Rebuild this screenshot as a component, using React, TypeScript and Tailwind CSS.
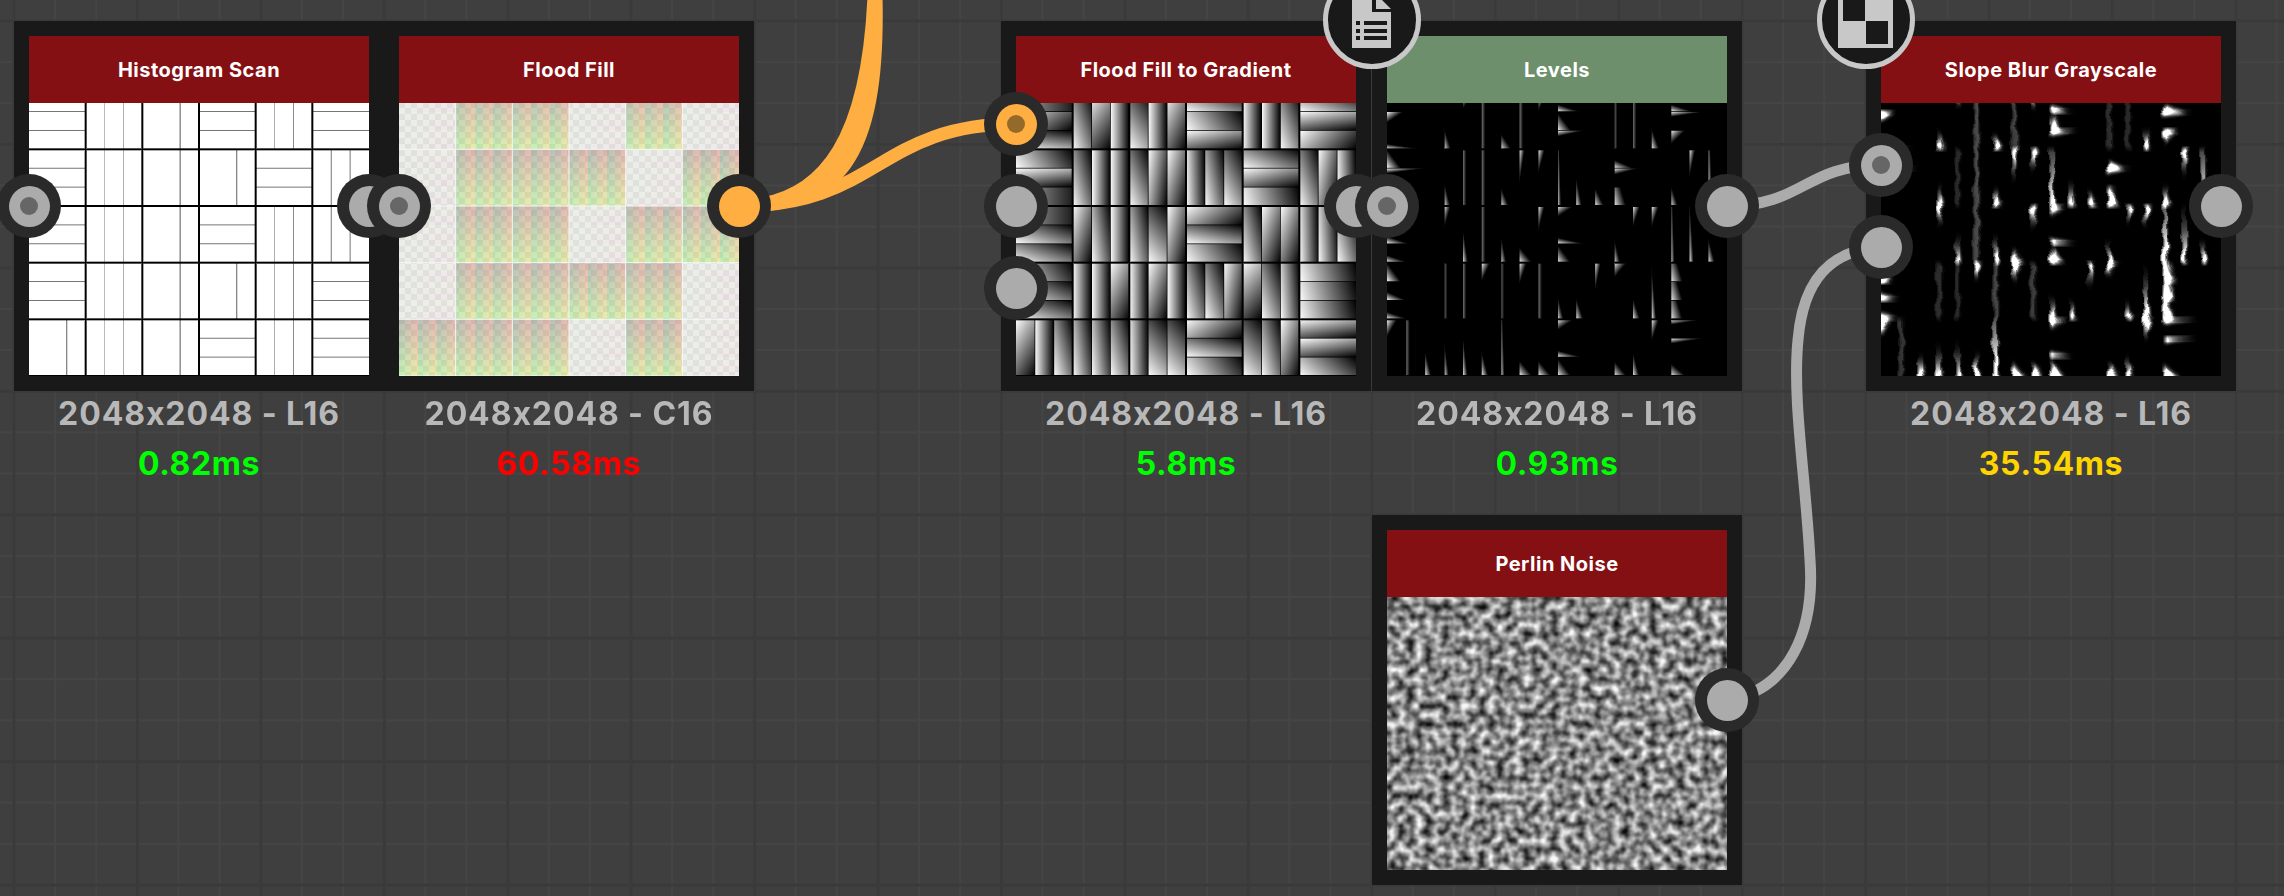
import { useEffect, useRef } from 'react'
import type { ReactNode } from 'react'

type Kind = 'histogram' | 'flood' | 'gradient' | 'levels' | 'slope' | 'perlin'

const S = 340
const B = S / 6

const ORIENT = ['HVVHVH', 'HVVHVH', 'HVVVHV', 'HVVHVV', 'HVVVVH', 'VVVHVH']

// width of the bright corner per plank: + bottom left, - top left, 0 never reaches the levels cut
const PLANKS = [
  [[0, 0, 0], [0, 0, 0], [0, 0, 0], [0, 0, 0], [0, 0, 0], [0, 0, 0]],
  [[0, -0.3, 0.65], [0.39, -0.6, 0.2], [0.6, 0.2, -0.47], [0.4, 0.25, -0.5], [0.2, 0.2, 0.42], [0.4, -0.63, -0.27]],
  [[0.25, -0.7, 0], [0.35, 0.2, 0.2], [0.45, -0.29, -0.36], [0.22, 0.32, 0.5], [0.35, -0.45, 0.22], [0.4, -0.32, 0.22]],
  [[0, 0.4, 0.4], [-0.37, 0.29, 0.2], [0.32, 0.7, -0.35], [-0.3, 0.5, 0.25], [0.35, -0.4, -0.4], [0.22, 0.24, 0.36]],
  [[0.25, 0.35, 0.4], [0.2, 0.2, -0.47], [0.2, -0.4, 0.2], [0.35, 0.4, -0.32], [-0.7, 0.4, 0.25], [0.22, 0.22, 0.22]],
  [[-0.55, 0.2, 0.35], [0.28, 0.27, 0.36], [0.22, 0.7, 0.7], [-0.3, 0.45, 0.25], [0.7, 0.36, -0.4], [-0.6, -0.6, 0.28]],
]

// how dark the two inner plank lines of a vertical block are, per column
const VERTICAL_LINES = [[0, 0.7], [0.3, 0.35], [0, 0.75], [0, 0.7], [0.35, 0.5], [0.6, 0.6]]

const clamp = (v: number) => Math.max(0, Math.min(1, v))

function hash(a: number, b: number) {
  const s = Math.sin(a * 127.1 + b * 311.7) * 43758.5453
  return s - Math.floor(s)
}

function noise(x: number, y: number) {
  const ix = Math.floor(x)
  const iy = Math.floor(y)
  const dot = (cx: number, cy: number) => {
    const a = hash(cx, cy) * Math.PI * 2
    return Math.cos(a) * (x - cx) + Math.sin(a) * (y - cy)
  }
  const fade = (t: number) => t * t * t * (t * (t * 6 - 15) + 10)
  const u = fade(x - ix)
  const v = fade(y - iy)
  const top = dot(ix, iy) * (1 - u) + dot(ix + 1, iy) * u
  const bottom = dot(ix, iy + 1) * (1 - u) + dot(ix + 1, iy + 1) * u
  return top * (1 - v) + bottom * v
}

function plankAt(x: number, y: number) {
  const c = Math.min(5, Math.floor(x / B))
  const r = Math.min(5, Math.floor(y / B))
  const fx = x - c * B
  const fy = y - r * B
  const vertical = ORIENT[r][c] === 'V'
  const along = vertical ? fx : fy
  const i = Math.min(2, Math.floor(along / (B / 3)))
  const inPlank = (along - (i * B) / 3) / (B / 3)
  const u = vertical ? inPlank : fx / B
  const v = vertical ? fy / B : inPlank
  const blockDist = Math.min(c > 0 ? fx : 99, c < 5 ? B - fx : 99, r > 0 ? fy : 99, B - fy)
  const plankDist = Math.min(i > 0 ? along - (i * B) / 3 : 99, i < 2 ? ((i + 1) * B) / 3 - along : 99)
  const line = along < B / 2 ? 0 : 1
  return { c, r, i, u, v, fy, vertical, blockDist, plankDist, line }
}

function gradientValue(p: ReturnType<typeof plankAt>) {
  const w = PLANKS[p.r][p.c][p.i]
  if (w === 0) return 0.74 * (1 - p.u * 0.85)
  const wu = Math.abs(w)
  const dv = w > 0 ? 1 - p.v : p.v
  return clamp(1 - (0.2 * p.u) / wu - 0.2 * dv * (5 - 1 / wu))
}

function levelsAt(x: number, y: number, lineGain = 0.5) {
  const p = plankAt(x, y)
  const w = Math.abs(PLANKS[p.r][p.c][p.i])
  const lit = clamp((gradientValue(p) - 0.8) / 0.2)
  // planks lit along a whole side only show as a thin dim line
  return w === 0.2 ? lit * lineGain : lit
}

function paint(ctx: CanvasRenderingContext2D, kind: Kind) {
  const img = ctx.createImageData(S, S)
  const levels = new Float32Array(S * S)
  if (kind === 'slope') {
    for (let y = 0; y < S; y++) for (let x = 0; x < S; x++) levels[y * S + x] = levelsAt(x + 0.5, y + 0.5, 0.3)
  }
  for (let y = 0; y < S; y++) {
    for (let x = 0; x < S; x++) {
      const px = x + 0.5
      const py = y + 0.5
      let rgb = [0, 0, 0]
      if (kind === 'perlin') {
        const n = noise(x / 9 + 3, y / 9 + 7) + 0.2 * noise(x / 4.5, y / 4.5)
        const g = clamp(0.53 + 0.85 * n) * 235 + 12
        rgb = [g, g, g]
      } else if (kind === 'slope') {
        const dx = noise(x / 12, y / 12) * 4
        let sum = 0
        for (let k = -3; k <= 3; k++) {
          for (let h = -2; h <= 2; h++) {
            const sx = Math.max(0, Math.min(S - 1, Math.round(x + dx + h)))
            const sy = Math.max(0, Math.min(S - 1, y + k))
            sum += levels[sy * S + sx]
          }
        }
        const v = sum / 35
        const g = clamp(v * 1.6 + v * v * 3) * 255
        rgb = [g, g, g]
      } else {
        const p = plankAt(px, py)
        const blockLine = clamp(1.5 - p.blockDist)
        const plankLine = clamp(0.95 - p.plankDist)
        if (kind === 'histogram') {
          const dark = p.vertical ? VERTICAL_LINES[p.c][p.line] : 0.6
          const g = 255 * (1 - plankLine * dark) * (1 - blockLine)
          rgb = [g, g, g]
        } else if (kind === 'flood') {
          const on = (Math.floor(x / 6) + Math.floor(y / 6)) % 2 === 0
          const base = on ? [240, 241, 238] : [227, 229, 225]
          const vb = p.fy / B
          const mix = (a: number, b: number, c: number, d: number) =>
            (a * (1 - p.u) + b * p.u) * (1 - vb) + (c * (1 - p.u) + d * p.u) * vb
          const tint = p.vertical
            ? [mix(0.76, 0.98, 0.8, 1), mix(0.8, 0.77, 1, 0.97), mix(0.77, 0.76, 0.78, 0.72)]
            : [0.98 + 0.02 * p.u, 0.99 - 0.04 * p.v * p.u, 0.98]
          const seam = clamp(1 - p.blockDist)
          rgb = base.map((b, j) => b * tint[j] * (1 - seam) + 246 * seam)
        } else {
          const g = kind === 'gradient' ? gradientValue(p) : levelsAt(px, py)
          const v = g * 255 * (1 - blockLine) * (1 - plankLine * 0.85)
          rgb = [v, v, v]
        }
      }
      const o = (y * S + x) * 4
      img.data[o] = rgb[0]
      img.data[o + 1] = rgb[1]
      img.data[o + 2] = rgb[2]
      img.data[o + 3] = 255
    }
  }
  ctx.putImageData(img, 0, 0)
}

function Texture({ kind }: { kind: Kind }) {
  const ref = useRef<HTMLCanvasElement>(null)
  useEffect(() => {
    const ctx = ref.current?.getContext('2d')
    if (ctx) paint(ctx, kind)
  }, [kind])
  return <canvas ref={ref} width={S} height={S} className="block h-[340px] w-[340px]" />
}

interface SocketInfo {
  dot?: boolean
  orange?: boolean
}

function Socket({ dot, orange }: SocketInfo) {
  return (
    <div className="flex h-16 w-16 items-center justify-center rounded-full bg-[#2a2a2a]">
      <div className={`flex h-[41px] w-[41px] items-center justify-center rounded-full ${orange ? 'bg-[#ffae42]' : 'bg-[#ababab]'}`}>
        {dot && <div className={`h-[18px] w-[18px] rounded-full ${orange ? 'bg-[#946a2a]' : 'bg-[#666666]'}`} />}
      </div>
    </div>
  )
}

function Badge({ children }: { children: ReactNode }) {
  return (
    <div className="absolute -left-[49px] -top-[50px] z-10 h-[98px] w-[98px] overflow-hidden rounded-full border-[5px] border-[#c8c8c8] bg-[#191919]">
      {children}
    </div>
  )
}

function DocIcon() {
  return (
    <svg viewBox="0 0 88 88" className="h-[88px] w-[88px]">
      <path d="M24 0H44V36H63V72H24Z" fill="#c8c8c8" />
      <path d="M48 18L63 33H48Z" fill="#c8c8c8" />
      <g fill="#191919">
        <rect x="28" y="45" width="4" height="4" />
        <rect x="36" y="45" width="23" height="4" />
        <rect x="28" y="53" width="4" height="4" />
        <rect x="36" y="53" width="23" height="4" />
        <rect x="28" y="60" width="4" height="4" />
        <rect x="36" y="60" width="23" height="4" />
      </g>
    </svg>
  )
}

function CheckerIcon() {
  return (
    <svg viewBox="0 0 88 88" className="h-[88px] w-[88px]">
      <rect x="16" y="0" width="55" height="72" fill="#c8c8c8" />
      <rect x="21" y="0" width="22" height="45" fill="#191919" />
      <rect x="44" y="45" width="22" height="23" fill="#191919" />
    </svg>
  )
}

interface NodeProps {
  position: string
  title: string
  kind: Kind
  format?: string
  time?: string
  timeColor?: string
  green?: boolean
  inputs?: SocketInfo[]
  output: SocketInfo
  badge?: ReactNode
}

function GraphNode({ position, title, kind, format, time, timeColor, green, inputs = [], output, badge }: NodeProps) {
  return (
    <div className={`absolute w-[370px] ${position}`}>
      <div className="relative h-[370px] w-[370px] bg-[#191919] p-[15px]">
        <div className="relative h-[340px] w-[340px]">
          <Texture kind={kind} />
          <div className={`absolute inset-x-0 top-0 flex h-[67px] items-center justify-center text-[20px] font-bold tracking-[0.5px] text-white ${green ? 'bg-[#6d8f6b]' : 'bg-[#851013]'}`}>
            {title}
          </div>
        </div>
        <div className="absolute inset-y-0 -left-[17px] flex flex-col justify-center gap-[18px]">
          {inputs.map((s, i) => (
            <Socket key={i} {...s} />
          ))}
        </div>
        <div className="absolute inset-y-0 -right-[17px] flex flex-col justify-center">
          <Socket {...output} />
        </div>
        {badge && <Badge>{badge}</Badge>}
      </div>
      {format && (
        <div className="mt-[2px] flex flex-col items-center gap-[8px] text-[32px] font-bold leading-[42px]">
          <span className="tracking-[0.9px] text-[#b8b8b8]">{format}</span>
          <span className={`tracking-[0.6px] ${timeColor}`}>{time}</span>
        </div>
      )}
    </div>
  )
}

export default function App() {
  return (
    <div className="relative h-[896px] w-[2284px] overflow-hidden bg-[#3f3f3f] font-['Inter','Liberation_Sans',sans-serif] [background-image:linear-gradient(90deg,#3a3a3a_3px,transparent_3px),linear-gradient(180deg,#3a3a3a_3px,transparent_3px),linear-gradient(90deg,#454545_2px,transparent_2px),linear-gradient(180deg,#454545_2px,transparent_2px)] [background-position:12.5px_0,0_19.5px,13px_0,0_20px] [background-size:123.45px_123.45px,123.45px_123.45px,41.15px_41.15px,41.15px_41.15px]">
      {/* wires */}
      <svg className="absolute inset-0" width="2284" height="896" fill="none">
        <g stroke="#ffae42" strokeWidth="13">
          <path d="M739 206C878 206 878 124 1016 124" />
          <path d="M739 206C830 205 868 130 874 -4" />
          <path d="M739 206C832 206 874 148 875 -4" />
          <path d="M739 206C835 206 880 165 876 -4" />
        </g>
        <g stroke="#ababab" strokeWidth="11">
          <path d="M1727 206C1804 206 1804 165 1881 165" />
          <path d="M1727 700C1790 690 1815 630 1810 560C1806 480 1792 400 1798 340C1803 280 1830 250 1881 247" />
        </g>
      </svg>

      <GraphNode position="left-[14px] top-[21px]" title="Histogram Scan" kind="histogram" format="2048x2048 - L16" time="0.82ms" timeColor="text-[#00ff00]" inputs={[{ dot: true }]} output={{}} />
      <GraphNode position="left-[384px] top-[21px]" title="Flood Fill" kind="flood" format="2048x2048 - C16" time="60.58ms" timeColor="text-[#ff0000]" inputs={[{ dot: true }]} output={{ orange: true }} />
      <GraphNode position="left-[1001px] top-[21px]" title="Flood Fill to Gradient" kind="gradient" format="2048x2048 - L16" time="5.8ms" timeColor="text-[#00ff00]" inputs={[{ dot: true, orange: true }, {}, {}]} output={{}} />
      <GraphNode position="left-[1372px] top-[21px]" title="Levels" kind="levels" format="2048x2048 - L16" time="0.93ms" timeColor="text-[#00ff00]" green inputs={[{ dot: true }]} output={{}} badge={<DocIcon />} />
      <GraphNode position="left-[1866px] top-[21px]" title="Slope Blur Grayscale" kind="slope" format="2048x2048 - L16" time="35.54ms" timeColor="text-[#ffd500]" inputs={[{ dot: true }, {}]} output={{}} badge={<CheckerIcon />} />
      <GraphNode position="left-[1372px] top-[515px]" title="Perlin Noise" kind="perlin" output={{}} />
    </div>
  )
}
